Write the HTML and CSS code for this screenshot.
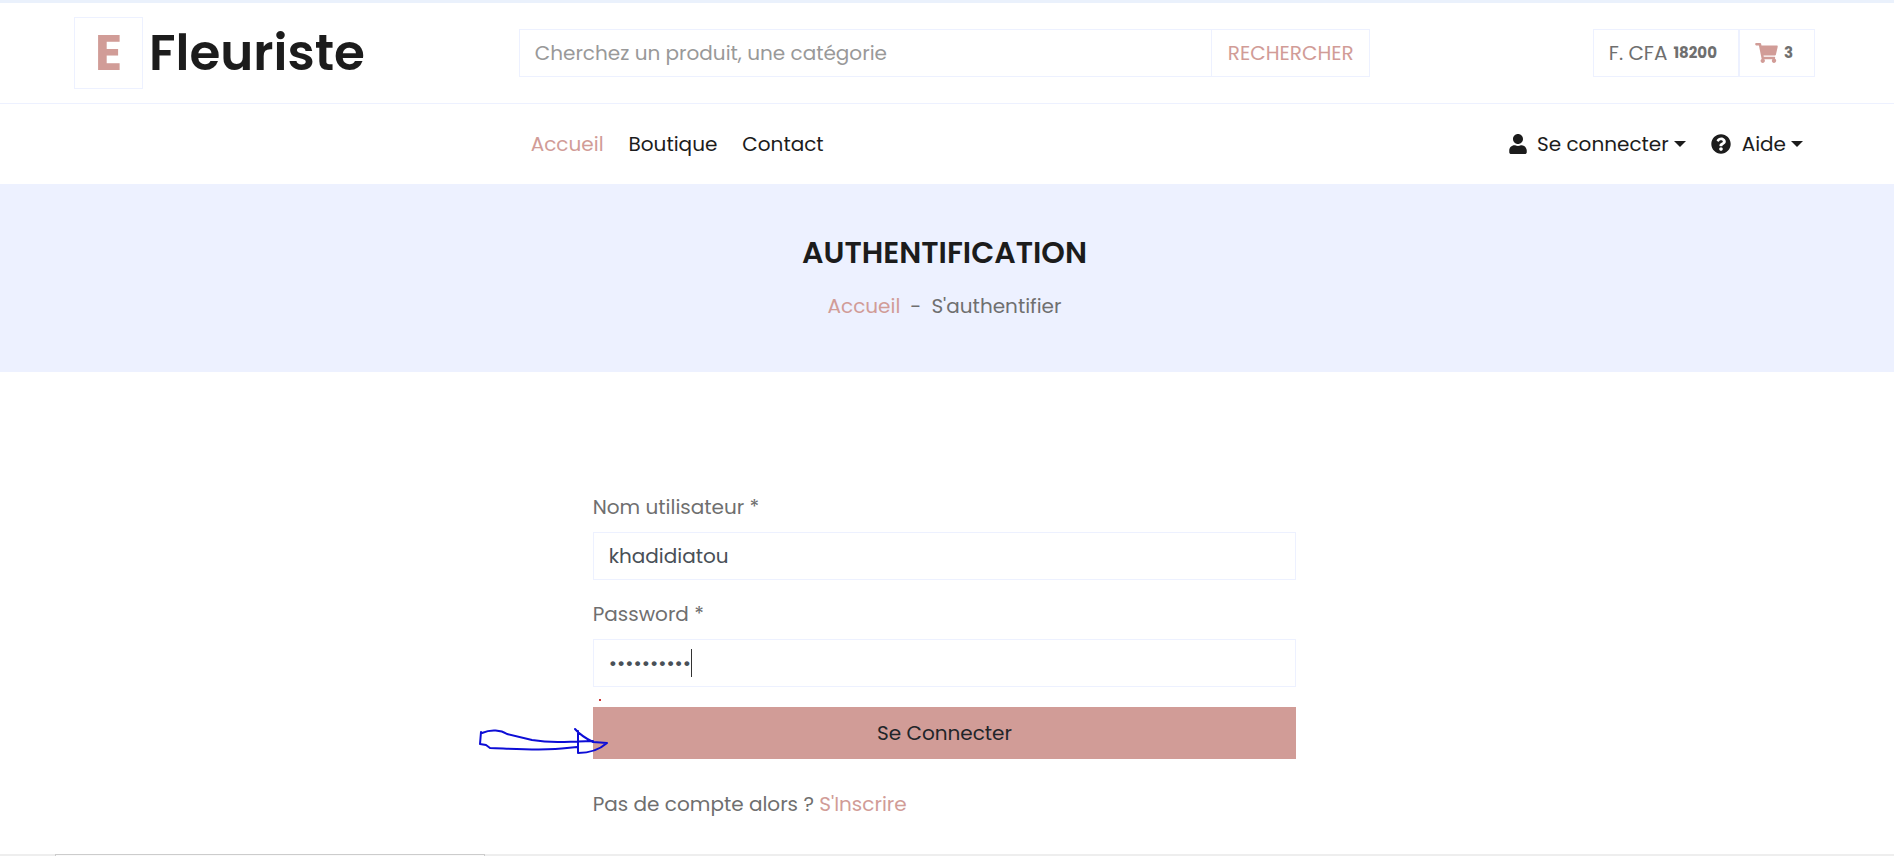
FILE: index.html
```html
<!DOCTYPE html>
<html lang="fr">
<head>
<meta charset="utf-8">
<meta name="viewport" content="width=device-width, initial-scale=1">
<title>Fleuriste - Authentification</title>
<link rel="stylesheet" href="styles.css">
</head>
<body>
<header>
  <div class="topbar grid">
    <a class="logo" href="#"><span class="logo-mark">E</span><span class="logo-name">Fleuriste</span></a>
    <form class="search">
      <input class="search-input" type="text" placeholder="Cherchez un produit, une catégorie" aria-label="Cherchez un produit, une catégorie">
      <button class="search-button" type="button">RECHERCHER</button>
    </form>
    <div class="cart">
      <a class="cart-box" href="#">F. CFA <strong class="badge">18200</strong></a>
      <a class="cart-box" href="#">
        <svg class="cart-icon" viewBox="0 0 576 512" aria-hidden="true"><path fill="currentColor" d="M528.12 301.319l47.273-208C578.806 78.301 567.391 64 551.99 64H159.208l-9.166-44.81C147.758 8.021 137.93 0 126.529 0H24C10.745 0 0 10.745 0 24v16c0 13.255 10.745 24 24 24h69.883l70.248 343.435C147.325 417.1 136 435.222 136 456c0 30.928 25.072 56 56 56s56-25.072 56-56c0-15.674-6.447-29.835-16.824-40h209.647C430.447 426.165 424 440.326 424 456c0 30.928 25.072 56 56 56s56-25.072 56-56c0-22.172-12.888-41.332-31.579-50.405l5.517-24.276c3.413-15.018-8.002-29.319-23.403-29.319H218.117l-6.545-32h293.145c11.206 0 20.92-7.754 23.403-18.681z"/></svg>
        <strong class="badge">3</strong>
      </a>
    </div>
  </div>
  <div class="navbar grid">
    <nav class="nav">
      <div class="nav-group">
        <a class="nav-link active" href="#">Accueil</a>
        <a class="nav-link" href="#">Boutique</a>
        <a class="nav-link" href="#">Contact</a>
      </div>
      <div class="nav-group">
        <a class="nav-link menu" href="#"><svg class="icon-user" viewBox="0 0 448 512" aria-hidden="true"><path fill="currentColor" d="M224 256c70.7 0 128-57.3 128-128S294.7 0 224 0 96 57.3 96 128s57.3 128 128 128zm89.6 32h-16.7c-22.2 10.2-46.9 16-72.9 16s-50.6-5.8-72.9-16h-16.7C60.2 288 0 348.2 0 422.4V464c0 26.5 21.5 48 48 48h352c26.5 0 48-21.5 48-48v-41.6c0-74.2-60.2-134.4-134.4-134.4z"/></svg><span>Se connecter</span><span class="arrow"></span></a>
        <a class="nav-link menu" href="#"><svg class="icon-help" viewBox="0 0 512 512" aria-hidden="true"><path fill="currentColor" d="M504 256c0 136.997-111.043 248-248 248S8 392.997 8 256C8 119.083 119.043 8 256 8s248 111.083 248 248zM262.655 90c-54.497 0-89.255 22.957-116.549 63.758-3.536 5.286-2.353 12.415 2.715 16.258l34.699 26.31c5.205 3.947 12.621 3.008 16.665-2.122 17.864-22.658 30.113-35.797 57.303-35.797 20.429 0 45.698 13.148 45.698 32.958 0 14.976-12.363 22.667-32.534 33.976C247.128 238.528 216 254.941 216 296v4c0 6.627 5.373 12 12 12h56c6.627 0 12-5.373 12-12v-1.333c0-28.462 83.186-29.647 83.186-106.667 0-58.002-60.165-102-116.531-102zM256 338c-25.365 0-46 20.635-46 46 0 25.364 20.635 46 46 46s46-20.636 46-46c0-25.365-20.635-46-46-46z"/></svg><span>Aide</span><span class="arrow"></span></a>
      </div>
    </nav>
  </div>
</header>
<section class="banner">
  <h1 class="title">AUTHENTIFICATION</h1>
  <p class="crumbs"><a class="link" href="#">Accueil</a><span>-</span><span>S'authentifier</span></p>
</section>
<main class="content">
  <form class="login">
    <label class="label" for="username">Nom utilisateur *</label>
    <input class="field" id="username" type="text" value="khadidiatou">
    <label class="label" for="password">Password *</label>
    <div class="password-wrap">
      <input class="field" id="password" type="password" value="motdepasse">
      <span class="caret"></span>
    </div>
    <div class="submit-wrap">
      <button class="submit" type="button">Se Connecter</button>
      <span class="red-dot"></span>
      <svg class="pointer" viewBox="0 0 134 30" aria-hidden="true"><path d="M4 6 3 18 9 19 13 22C40 23 70 25 90 22L100 21M5 7C14 3 24 4 30 8L55 14C75 17 90 16 116 15M98 3C104 10 110 13 116 16L130 17C122 24 112 27 101 27L101 5" fill="none" stroke="#0d0dd6" stroke-width="2" stroke-linecap="round" stroke-linejoin="round"/></svg>
    </div>
    <p class="signup">Pas de compte alors ? <a class="link" href="#">S'Inscrire</a></p>
  </form>
</main>
<footer class="bottom"><div class="bottom-tab"></div></footer>
</body>
</html>
```
FILE: styles.css
```css
* { box-sizing: border-box; }
body {
  margin: 0;
  min-height: 100vh;
  display: flex;
  flex-direction: column;
  background: #fff;
  color: #6f6f6f;
  font: 400 20px/30px Poppins, Inter, sans-serif;
}
a { color: inherit; text-decoration: none; }
input, button { font: inherit; border-radius: 0; }
.link { color: #d19c97; }
.grid {
  display: grid;
  grid-template-columns: repeat(12, 1fr);
  column-gap: 38px;
  padding: 0 79px 0 74px;
}
.topbar {
  align-items: center;
  height: 104px;
  border-top: 3px solid #eaf1fc;
  border-bottom: 1px solid #edf1ff;
}
.logo {
  grid-column: span 3;
  display: flex;
  align-items: center;
  gap: 6px;
  color: #1c1c1c;
  font-size: 50px;
  font-weight: 600;
  line-height: 72px;
}
.logo-mark {
  width: 69px;
  border: 1px solid #edf1ff;
  color: #d19c97;
  font-weight: 700;
  line-height: 70px;
  text-align: center;
}
.search { grid-column: span 6; display: flex; height: 48px; }
.search-input {
  flex: 1;
  min-width: 0;
  padding: 0 15px;
  border: 1px solid #edf1ff;
  border-right: 0;
}
.search-input::placeholder { color: #999; opacity: 1; }
.search-button {
  width: 159px;
  padding: 0;
  border: 1px solid #edf1ff;
  background: transparent;
  color: #d19c97;
}
.cart { grid-column: span 3; display: flex; justify-content: flex-end; }
.cart-box {
  display: flex;
  align-items: center;
  gap: 6px;
  height: 48px;
  padding: 0 21px 0 15px;
  border: 1px solid #edf1ff;
}
.badge { font-size: 15px; font-weight: 700; }
.cart-icon { width: 23px; height: 20px; color: #d19c97; }
.navbar { height: 80px; }
.nav {
  grid-column: 4 / -1;
  display: flex;
  justify-content: space-between;
  align-items: center;
  padding: 0 12px;
}
.nav-group { display: flex; gap: 25px; color: #1c1c1c; }
.active { color: #d19c97; }
.menu { display: flex; align-items: center; }
.icon-user { width: 18px; height: 20px; margin-right: 10px; }
.icon-help { width: 20px; height: 20px; margin-right: 11px; }
.arrow {
  margin-left: 5px;
  border: 6px solid transparent;
  border-top-color: currentColor;
  border-bottom: 0;
}
.banner {
  padding: 51px 5px 51px 0;
  background: #edf1ff;
  text-align: center;
}
.title {
  margin: 0 0 20px;
  color: #1c1c1c;
  font-size: 30px;
  font-weight: 600;
  line-height: 36px;
}
.crumbs { display: flex; justify-content: center; gap: 10px; margin: 0; }
.content { flex: 1; padding: 120px 79px 0 74px; }
.login {
  display: flex;
  flex-direction: column;
  width: calc((100% - 38px) * 5 / 12 - 6px);
  margin: 0 auto;
}
.label { margin-bottom: 10px; }
.field {
  width: 100%;
  height: 48px;
  padding: 0 15px;
  border: 1px solid #edf1ff;
  color: #495057;
  background: #fff;
}
#username { margin-bottom: 19px; }
.password-wrap { position: relative; }
.caret { position: absolute; left: 98px; top: 10px; width: 1px; height: 28px; background: #333; }
.submit-wrap { position: relative; margin: 20px 0 30px; }
.submit {
  width: 100%;
  height: 52px;
  border: 0;
  background: #d19c97;
  color: #212529;
}
.red-dot { position: absolute; left: 6px; top: -8px; width: 2px; height: 2px; background: #c33; }
.pointer { position: absolute; left: -116px; top: 19px; width: 134px; height: 30px; }
.signup { margin: 0; }
.bottom { height: 2px; padding-left: 55px; background: #eee; }
.bottom-tab { width: 430px; height: 2px; border: 1px solid #ccc; border-bottom: 0; background: #fafafa; }
```
